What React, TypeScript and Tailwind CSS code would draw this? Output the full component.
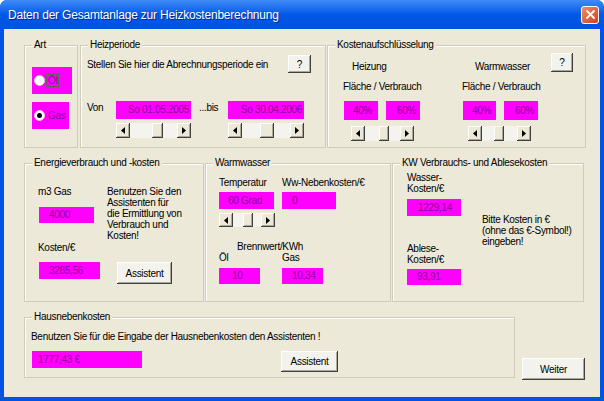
import React from 'react'

const raised =
  'bg-[#ECE9D8] shadow-[inset_-1px_-1px_0_#404040,inset_1px_1px_0_#ffffff,inset_-2px_-2px_0_#ACA899]'
const pushBtn =
  'flex items-center justify-center bg-[#F3F2EC] shadow-[inset_-1px_-1px_0_#404040,inset_1px_1px_0_#ffffff,inset_-2px_-2px_0_#ACA899]'

function Frame({ title, className, children }: { title: string; className: string; children?: React.ReactNode }) {
  return (
    <div className={`relative border border-[#CFCCBC] shadow-[inset_1px_1px_0_#ffffff] ${className}`}>
      <span className="absolute -top-[7px] left-[7px] bg-[#ECE9D8] px-[2px] leading-[12px] whitespace-nowrap">
        {title}
      </span>
      {children}
    </div>
  )
}

function Field({ value, className }: { value: string; className: string }) {
  return (
    <div className={`flex items-center bg-[#FF00FF] text-[#8E0494] leading-none whitespace-nowrap ${className}`}>
      {value}
    </div>
  )
}

function Arrow({ dir }: { dir: 'left' | 'right' }) {
  return (
    <svg width="4" height="7" viewBox="0 0 4 7">
      {dir === 'left' ? <polygon points="4,0 4,7 0,3.5" fill="#000" /> : <polygon points="0,0 0,7 4,3.5" fill="#000" />}
    </svg>
  )
}

function ScrollBar({ className, thumb }: { className: string; thumb: string }) {
  return (
    <div className={`flex ${className}`}>
      <div className={`flex w-[14px] shrink-0 items-center justify-center ${raised}`}>
        <Arrow dir="left" />
      </div>
      <div className="flex flex-1 bg-[#F4F3EE]">
        <div className={`h-full ${raised} ${thumb}`} />
      </div>
      <div className={`flex w-[14px] shrink-0 items-center justify-center ${raised}`}>
        <Arrow dir="right" />
      </div>
    </div>
  )
}

function Radio({ checked }: { checked?: boolean }) {
  return (
    <div className="flex h-[11px] w-[11px] items-center justify-center rounded-full border border-[#D8D6CC] bg-white">
      {checked && <div className="h-[5px] w-[5px] rounded-full bg-black" />}
    </div>
  )
}

export default function App() {
  return (
    <div className="flex h-[401px] w-[604px] flex-col overflow-hidden rounded-t-[7px] bg-[#0054E3] font-['Liberation_Sans',Arial,sans-serif] text-[10px] tracking-[-0.3px] text-black">
      {/* title bar */}
      <div className="flex h-[29px] shrink-0 items-center justify-between bg-gradient-to-b from-[#3D8BF7] via-[#0058E8] to-[#0152E0] pl-[8px] pr-[5px]">
        <span className="text-[12px] tracking-[-0.2px] text-white [text-shadow:1px_1px_0_#0A2A8A]">
          Daten der Gesamtanlage zur Heizkostenberechnung
        </span>
        <div className="flex h-[18px] w-[18px] items-center justify-center rounded-[3px] border border-white bg-gradient-to-br from-[#F08A64] to-[#D2401A]">
          <svg width="9" height="9" viewBox="0 0 9 9">
            <path d="M1 1 L8 8 M8 1 L1 8" stroke="#fff" strokeWidth="1.8" strokeLinecap="round" />
          </svg>
        </div>
      </div>

      {/* body */}
      <div className="mx-[4px] mb-[4px] flex-1 bg-[#ECE9D8] pl-[20px] pt-[16px]">
        {/* row 1 */}
        <div className="flex items-start">
          <Frame title="Art" className="h-[103px] w-[54px]">
            <div className="ml-[7px] mt-[21px] flex h-[27px] w-[40px] items-center bg-[#FF00FF] pl-[2px]">
              <Radio />
              <span className="ml-[2px] px-[1px] leading-[11px] text-[#8E0494] outline-1 outline-dotted outline-[#555]">Öl</span>
            </div>
            <div className="ml-[7px] mt-[8px] flex h-[27px] w-[37px] items-center bg-[#FF00FF] pl-[2px]">
              <Radio checked />
              <span className="ml-[3px] text-[#8E0494]">Gas</span>
            </div>
          </Frame>

          <Frame title="Heizperiode" className="ml-[2px] h-[103px] w-[246px]">
            <div className="pl-[6px] pt-[9px]">
              <div className="flex items-center pr-[14px]">
                <span className="flex-1">Stellen Sie hier die Abrechnungsperiode ein</span>
                <div className={`h-[18px] w-[23px] ${pushBtn}`}>?</div>
              </div>
              <div className="mt-[28px] flex items-start">
                <span className="w-[29px] pt-[1px] leading-[12px]">Von</span>
                <div className="w-[75px]">
                  <Field value="So 01.05.2005" className="h-[18px] justify-end pr-[2px]" />
                  <ScrollBar className="mt-[4px] h-[15px]" thumb="ml-[22px] w-[11px]" />
                </div>
                <span className="ml-[8px] w-[29px] pt-[1px] leading-[12px]">...bis</span>
                <div className="w-[76px]">
                  <Field value="So 30.04.2006" className="h-[18px] justify-end pr-[2px]" />
                  <ScrollBar className="mt-[4px] h-[15px]" thumb="ml-[18px] w-[14px]" />
                </div>
              </div>
            </div>
          </Frame>

          <Frame title="Kostenaufschlüsselung" className="ml-[1px] h-[103px] w-[259px]">
            <div className="flex pl-[15px] pt-[7px]">
              <div className="w-[119px]">
                <div className="mt-[8px] pl-[9px] leading-[12px]">Heizung</div>
                <div className="mt-[8px] leading-[12px] whitespace-nowrap">Fläche / Verbrauch</div>
                <div className="mt-[8px] flex">
                  <Field value="40%" className="ml-[1px] h-[19px] w-[34px] pl-[9px]" />
                  <Field value="60%" className="ml-[8px] h-[19px] w-[34px] pl-[11px]" />
                </div>
                <ScrollBar className="ml-[8px] mt-[6px] h-[15px] w-[63px]" thumb="ml-[14px] w-[10px]" />
              </div>
              <div className="w-[89px]">
                <div className="mt-[8px] pl-[13px] leading-[12px]">Warmwasser</div>
                <div className="mt-[8px] leading-[12px] whitespace-nowrap">Fläche / Verbrauch</div>
                <div className="mt-[8px] flex">
                  <Field value="40%" className="ml-[1px] h-[19px] w-[33px] pl-[9px]" />
                  <Field value="60%" className="ml-[8px] h-[19px] w-[34px] pl-[11px]" />
                </div>
                <ScrollBar className="ml-[6px] mt-[6px] h-[15px] w-[63px]" thumb="ml-[12px] w-[10px]" />
              </div>
              <div className={`h-[19px] w-[22px] ${pushBtn}`}>?</div>
            </div>
          </Frame>
        </div>

        {/* row 2 */}
        <div className="mt-[15px] flex items-start">
          <Frame title="Energieverbrauch und -kosten" className="h-[139px] w-[180px]">
            <div className="flex pl-[13px]">
              <div className="w-[69px]">
                <div className="mt-[22px] leading-[12px]">m3 Gas</div>
                <Field value="4000" className="ml-[1px] mt-[9px] h-[16px] w-[55px] pl-[10px]" />
                <div className="mt-[19px] leading-[12px]">Kosten/€</div>
                <Field value="3285,56" className="ml-[1px] mt-[8px] h-[17px] w-[61px] pl-[10px]" />
              </div>
              <div>
                <div className="mt-[22px] leading-[11px]">
                  Benutzen Sie den
                  <br />
                  Assistenten für
                  <br />
                  die Ermittlung von
                  <br />
                  Verbrauch und
                  <br />
                  Kosten!
                </div>
                <div className={`ml-[10px] mt-[21px] h-[22px] w-[55px] ${pushBtn}`}>Assistent</div>
              </div>
            </div>
          </Frame>

          <Frame title="Warmwasser" className="ml-[1px] h-[139px] w-[186px]">
            <div className="pl-[13px]">
              <div className="mt-[13px] flex">
                <div className="w-[63px]">
                  <div className="leading-[12px]">Temperatur</div>
                  <Field value="60 Grad" className="mt-[3px] h-[17px] w-[55px] pl-[9px]" />
                  <ScrollBar className="mt-[4px] h-[14px] w-[56px]" thumb="ml-[10px] w-[10px]" />
                </div>
                <div>
                  <div className="leading-[12px] whitespace-nowrap">Ww-Nebenkosten/€</div>
                  <Field value="0" className="mt-[3px] h-[17px] w-[54px] pl-[10px]" />
                </div>
              </div>
              <div className="mt-[14px] pl-[18px] leading-[11px]">Brennwert/KWh</div>
              <div className="flex">
                <div className="w-[63px]">
                  <div className="leading-[11px]">Öl</div>
                  <Field value="10" className="mt-[5px] h-[16px] w-[41px] pl-[13px]" />
                </div>
                <div>
                  <div className="leading-[11px]">Gas</div>
                  <Field value="10,34" className="mt-[5px] h-[16px] w-[41px] pl-[10px]" />
                </div>
              </div>
            </div>
          </Frame>

          <Frame title="KW Verbrauchs- und Ablesekosten" className="ml-[1px] h-[139px] w-[192px]">
            <div className="flex pl-[14px]">
              <div className="w-[75px]">
                <div className="mt-[8px] leading-[11px]">
                  Wasser-
                  <br />
                  Kosten/€
                </div>
                <Field value="1229,14" className="mt-[5px] h-[17px] w-[54px] pl-[11px]" />
                <div className="mt-[27px] leading-[11px]">
                  Ablese-
                  <br />
                  Kosten/€
                </div>
                <Field value="93,91" className="mt-[4px] h-[16px] w-[54px] pl-[10px]" />
              </div>
              <div className="mt-[50px] leading-[11px]">
                Bitte Kosten in €
                <br />
                (ohne das €-Symbol!)
                <br />
                eingeben!
              </div>
            </div>
          </Frame>
        </div>

        {/* row 3 */}
        <div className="mt-[15px] flex items-start">
          <Frame title="Hausnebenkosten" className="h-[61px] w-[491px]">
            <div className="pl-[6px]">
              <div className="mt-[13px] leading-[12px]">
                Benutzen Sie für die Eingabe der Hausnebenkosten den Assistenten !
              </div>
              <div className="mt-[8px] flex items-start">
                <Field value="1777,43 €" className="ml-[1px] h-[17px] w-[110px] pl-[6px]" />
                <div className={`ml-[139px] h-[21px] w-[57px] ${pushBtn}`}>Assistent</div>
              </div>
            </div>
          </Frame>
          <div className={`ml-[7px] mt-[41px] h-[22px] w-[63px] ${pushBtn}`}>Weiter</div>
        </div>
      </div>
    </div>
  )
}
